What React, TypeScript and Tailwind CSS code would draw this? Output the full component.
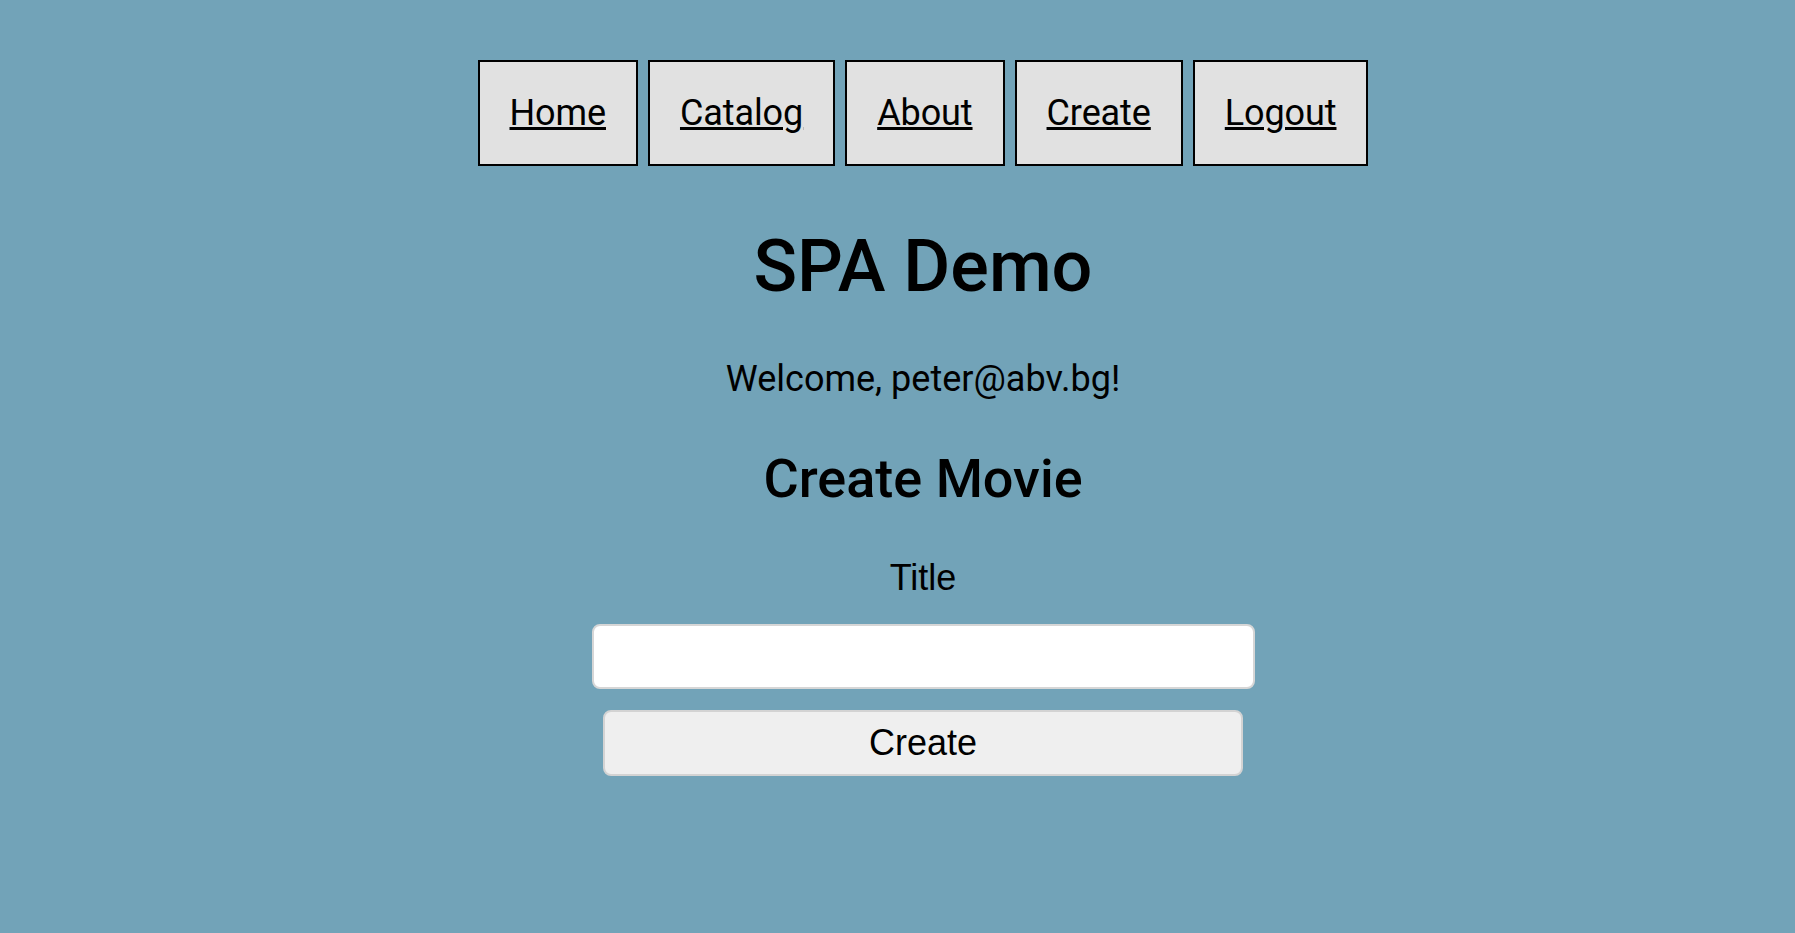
const links = ['Home', 'Catalog', 'About', 'Create', 'Logout']

export default function App() {
  return (
    <div className="min-h-screen bg-[#72a3b8] pl-[51px] font-['Roboto',sans-serif] text-black">
      <div className="flex flex-col items-center">
        {/* Nav */}
        <nav className="mt-[60px] flex gap-[10px]">
          {links.map((l) => (
            <a
              key={l}
              href="#"
              className="block border-2 border-black bg-[#e1e1e1] px-[30px] py-[30px] text-[36px] leading-[42px] tracking-[-0.1px] underline underline-offset-[2px] decoration-[3px]"
            >
              {l}
            </a>
          ))}
        </nav>

        <h1 className="mt-[59px] text-[72px] font-medium leading-[84px]">SPA Demo</h1>

        <p className="mt-[49px] text-[36px] leading-[42px]">Welcome, peter@abv.bg!</p>

        {/* Form */}
        <section className="mt-[47px] flex flex-col items-center">
          <h2 className="text-[54px] font-medium leading-[63px]">Create Movie</h2>
          <form className="flex flex-col items-center" onSubmit={(e) => e.preventDefault()}>
            <label htmlFor="title" className="mt-[47px] font-['Liberation_Sans',Arial,sans-serif] text-[36px] leading-[41px]">
              Title
            </label>
            <input
              id="title"
              type="text"
              className="mt-[26px] h-[65px] w-[663px] rounded-lg border-2 border-[#d6d6d6] bg-white px-3 text-[36px] outline-none"
            />
            <button
              type="submit"
              className="mt-[21px] h-[66px] w-[640px] rounded-lg border-2 border-[#d3d3d3] bg-[#efefef] font-['Liberation_Sans',Arial,sans-serif] text-[36px]"
            >
              Create
            </button>
          </form>
        </section>
      </div>
    </div>
  )
}
